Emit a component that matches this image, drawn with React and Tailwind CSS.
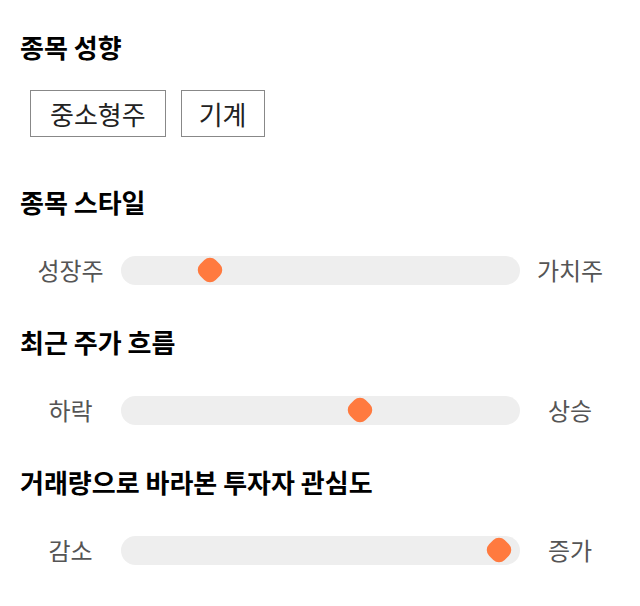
const sliders = [
  { title: "종목 스타일", left: "성장주", right: "가치주", pos: 210 },
  { title: "최근 주가 흐름", left: "하락", right: "상승", pos: 360 },
  { title: "거래량으로 바라본 투자자 관심도", left: "감소", right: "증가", pos: 499 },
];

function Slider({ left, right, pos }) {
  // thumb center in page x, track starts at 121
  const offset = pos - 121;
  return (
    <div className="flex h-[40px] items-center">
      <div className="w-[101px] text-center text-[24px] leading-none text-[#555555]">{left}</div>
      <div className="relative h-[29px] flex-1 rounded-full bg-[#eeeeee]">
        <div
          className="absolute top-1/2 h-[22px] w-[22px] -translate-x-1/2 -translate-y-1/2 rotate-45 rounded-[8px] bg-[#ff7a3f]"
          style={{ left: offset }}
        />
      </div>
      <div className="w-[100px] text-center text-[24px] leading-none text-[#555555]">{right}</div>
    </div>
  );
}

export default function App() {
  return (
    <div className="min-h-screen bg-white px-5 pt-[31px] font-['Noto_Sans_CJK_KR','Noto_Sans',sans-serif]">
      <h2 className="h-[32px] text-[26px] font-bold leading-[32px] text-black">종목 성향</h2>
      <div className="mt-[27px] flex gap-[15px] pl-[10px]">
        <button className="h-[47px] border border-[#888888] px-[19px] text-[26px] leading-none text-[#222222]">중소형주</button>
        <button className="h-[47px] border border-[#888888] px-[17px] text-[26px] leading-none text-[#222222]">기계</button>
      </div>
      {sliders.map((s, i) => (
        <div key={s.title} className={i === 0 ? "mt-[49px]" : "mt-[36px]"}>
          <h2 className="h-[32px] text-[26px] font-bold leading-[32px] text-black">{s.title}</h2>
          <div className="mt-[32px]">
            <Slider left={s.left} right={s.right} pos={s.pos} />
          </div>
        </div>
      ))}
    </div>
  );
}
